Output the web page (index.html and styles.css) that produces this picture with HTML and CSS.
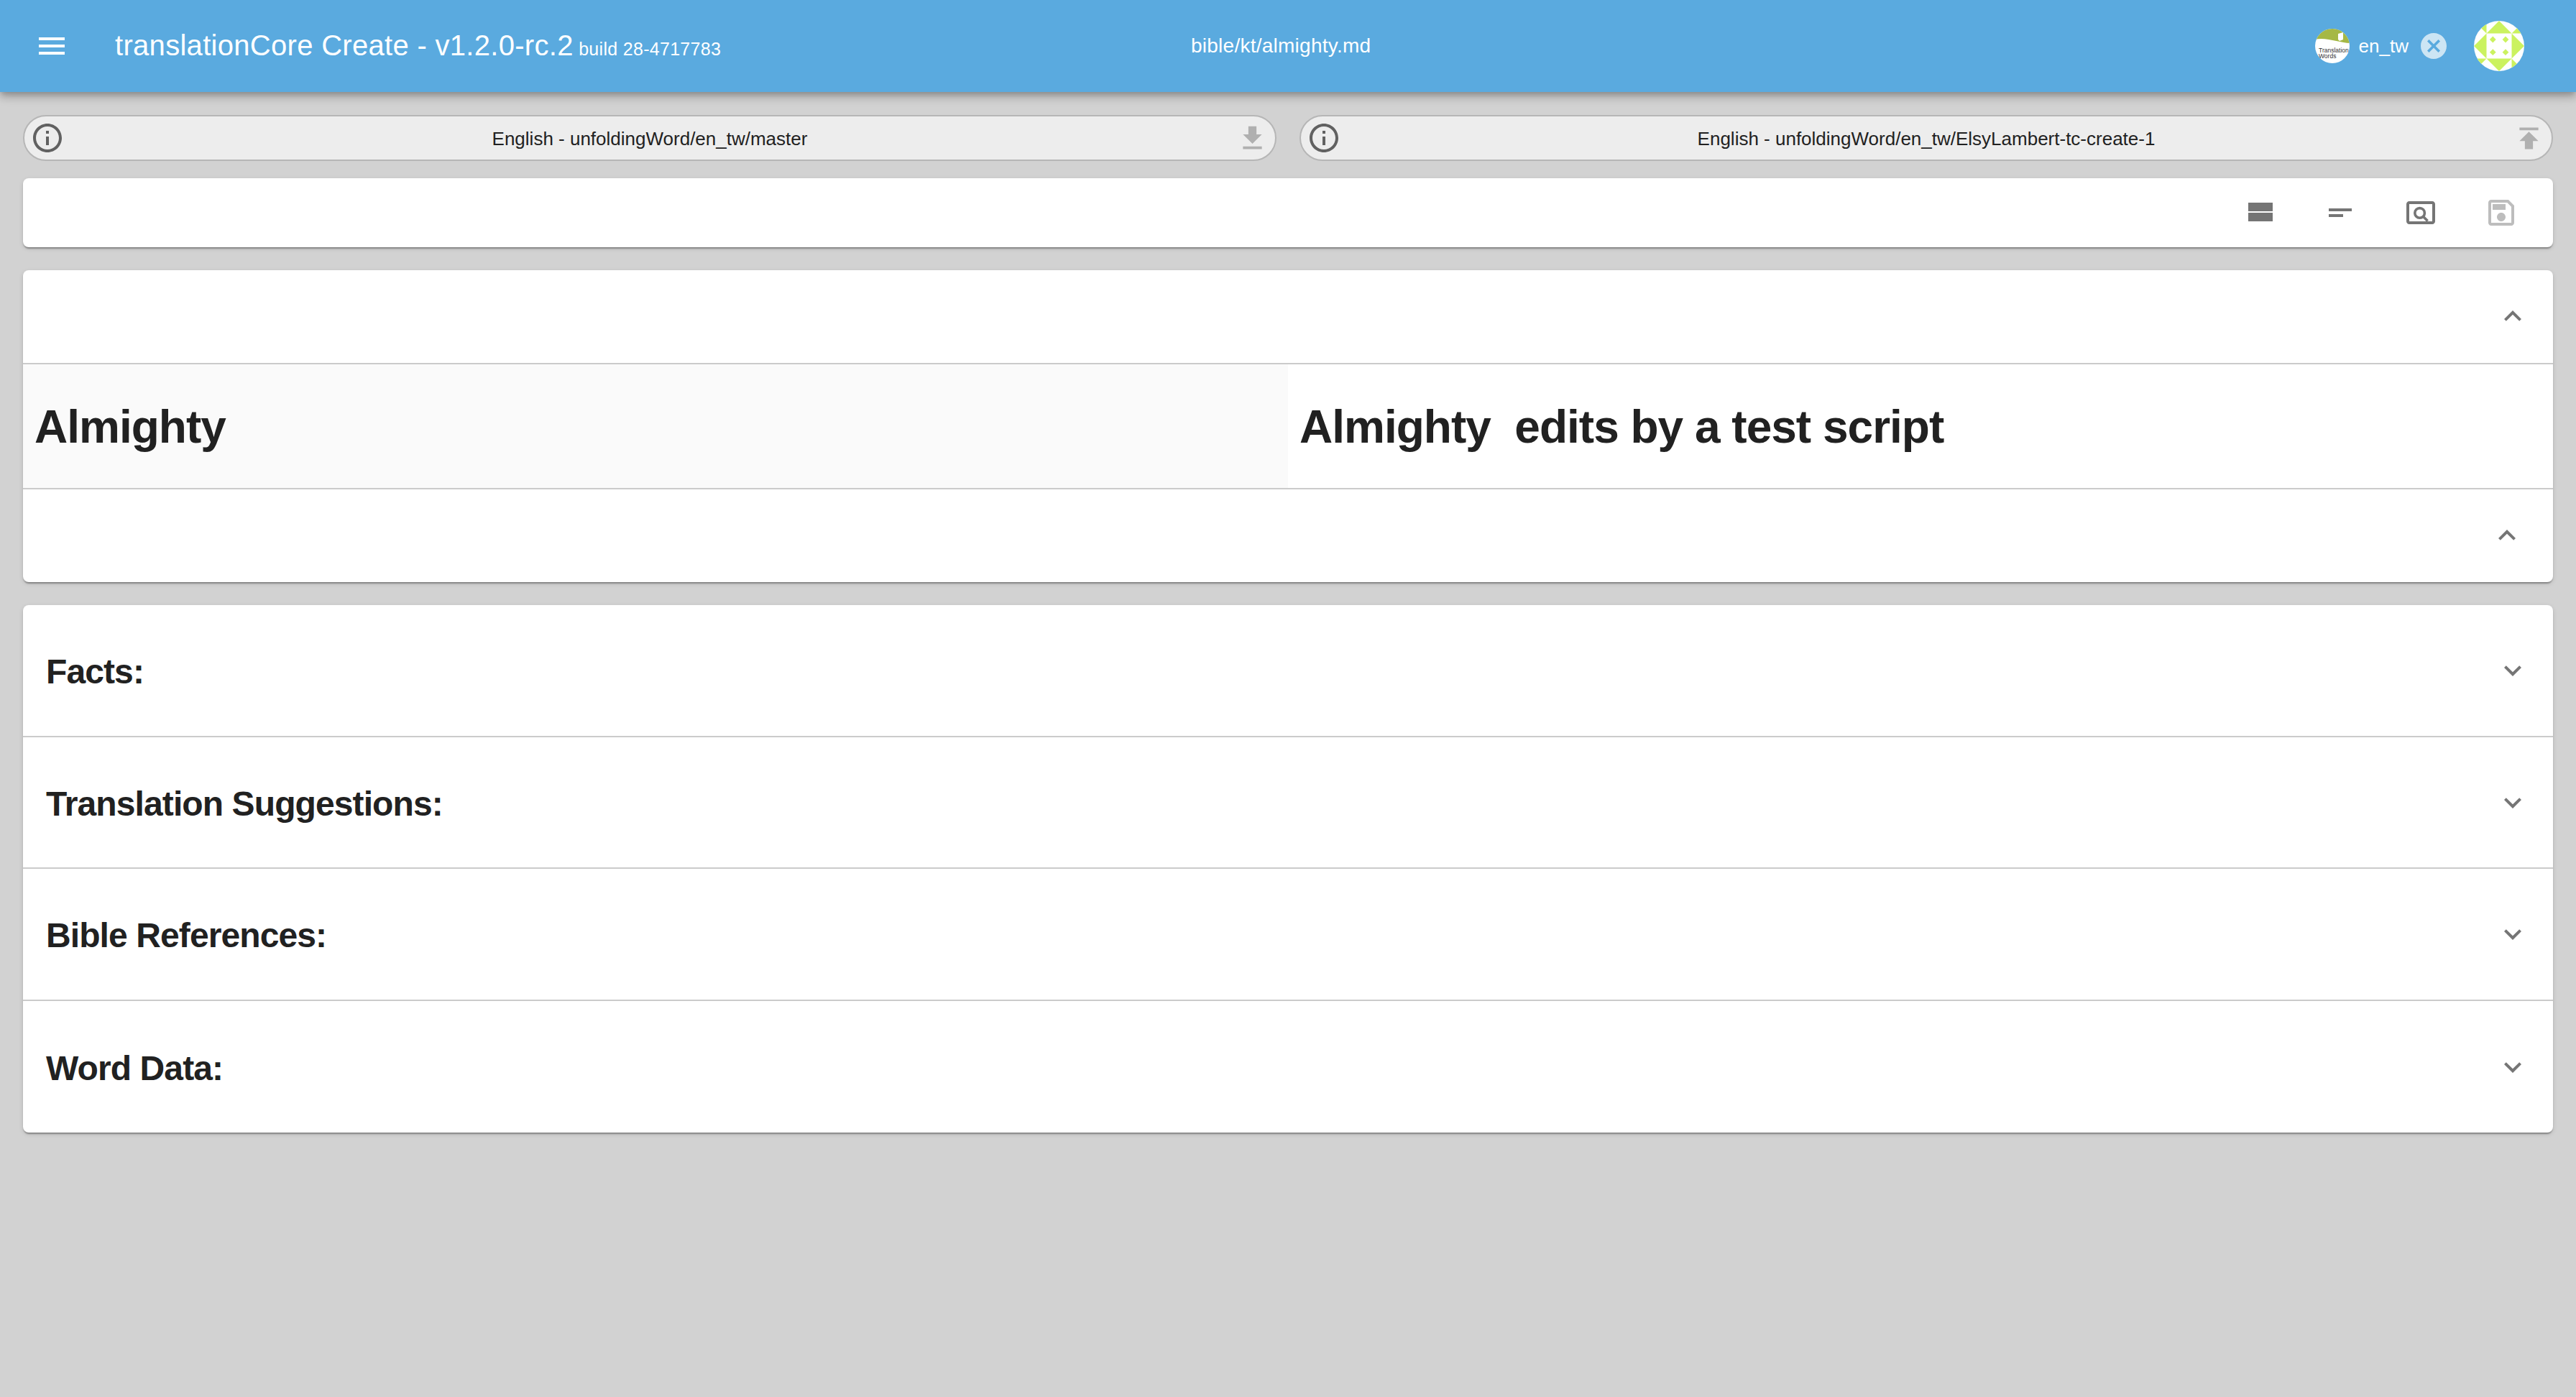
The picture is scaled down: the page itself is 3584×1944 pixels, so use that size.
FILE: index.html
```html
<!DOCTYPE html>
<html lang="en">
  <head>
    <meta charset="UTF-8" />
    <meta name="viewport" content="width=device-width, initial-scale=1.0" />
    <title>translationCore Create</title>
    <link rel="stylesheet" href="styles.css">
  </head>
  <body>
    <header class="app-bar">
      <svg class="icon menu-icon" viewBox="0 0 24 24"><path d="M3 18h18v-2H3v2zm0-5h18v-2H3v2zm0-7v2h18V6H3z" /></svg>
      <div class="app-title">translationCore Create - v1.2.0-rc.2 <small>build 28-4717783</small></div>
      <div class="file-path">bible/kt/almighty.md</div>
      <div class="app-right">
        <svg class="tw-logo" viewBox="0 0 48 48">
          <defs><clipPath id="logo-clip"><circle cx="24" cy="24" r="24" /></clipPath></defs>
          <g clip-path="url(#logo-clip)">
            <rect width="48" height="48" fill="#fff" />
            <path d="M0 0h48v20C36 20 14 11 0 15z" fill="#a5b845" />
            <path d="M32 7l7-2v10l-5 2-2-2z" fill="#fff" />
            <text x="5" y="33" class="tw-logo-text">Translation</text>
            <text x="5" y="41" class="tw-logo-text">Words</text>
          </g>
        </svg>
        <span class="repo-name">en_tw</span>
        <svg class="close-icon" viewBox="2 2 20 20"><path d="M12 2C6.47 2 2 6.47 2 12s4.47 10 10 10 10-4.47 10-10S17.53 2 12 2zm5 13.59L15.59 17 12 13.41 8.41 17 7 15.59 10.59 12 7 8.41 8.41 7 12 10.59 15.59 7 17 8.41 13.41 12 17 15.59z" /></svg>
        <svg class="avatar" viewBox="0 0 70 70">
          <circle cx="35" cy="35" r="35" fill="#fff" />
          <g clip-path="circle(35px at 35px 35px)" fill="#cbf25f">
            <path d="M35 0L17.5 17.5h35zM70 35L52.5 17.5v35zM35 70l17.5-17.5h-35zM0 35l17.5 17.5v-35z" />
            <path d="M17.5 0v17.5L8.75 8.75zM70 17.5H52.5l8.75-8.75zM52.5 70V52.5l8.75 8.75zM0 52.5h17.5l-8.75 8.75z" />
            <path d="M26.3 21.6l4.4 4.4-4.4 4.4-4.4-4.4zM44 21.6l4.4 4.4-4.4 4.4-4.4-4.4zM26.3 39.3l4.4 4.4-4.4 4.4-4.4-4.4zM44 39.3l4.4 4.4-4.4 4.4-4.4-4.4z" />
          </g>
        </svg>
      </div>
    </header>

    <main class="content">
      <div class="pills">
        <div class="pill">
          <svg class="icon info-icon" viewBox="0 0 24 24"><path d="M11 7h2v2h-2zm0 4h2v6h-2zm1-9C6.48 2 2 6.48 2 12s4.48 10 10 10 10-4.48 10-10S17.52 2 12 2zm0 18c-4.41 0-8-3.59-8-8s3.59-8 8-8 8 3.59 8 8-3.59 8-8 8z" /></svg>
          <span class="pill-text">English - unfoldingWord/en_tw/master</span>
          <span class="pill-action"><svg class="transfer-icon" viewBox="0 0 24 24"><path d="M19 9h-4V3H9v6H5l7 7 7-7zM5 18v2h14v-2H5z" /></svg></span>
        </div>
        <div class="pill">
          <svg class="icon info-icon" viewBox="0 0 24 24"><path d="M11 7h2v2h-2zm0 4h2v6h-2zm1-9C6.48 2 2 6.48 2 12s4.48 10 10 10 10-4.48 10-10S17.52 2 12 2zm0 18c-4.41 0-8-3.59-8-8s3.59-8 8-8 8 3.59 8 8-3.59 8-8 8z" /></svg>
          <span class="pill-text">English - unfoldingWord/en_tw/ElsyLambert-tc-create-1</span>
          <span class="pill-action"><svg class="transfer-icon" viewBox="0 0 24 24"><path d="M5 4v2h14V4H5zm0 10h4v6h6v-6h4l-7-7-7 7z" /></svg></span>
        </div>
      </div>

      <div class="card toolbar">
        <svg class="icon" viewBox="0 0 24 24"><path d="M4 18h17v-6H4v6zM4 5v6h17V5H4z" /></svg>
        <svg class="icon" viewBox="0 0 24 24"><path d="M4 9h16v2H4zm0 4h10v2H4z" /></svg>
        <svg class="icon" viewBox="0 0 24 24">
          <path d="M20 4H4c-1.1 0-2 .9-2 2v12c0 1.1.9 2 2 2h16c1.1 0 2-.9 2-2V6c0-1.1-.9-2-2-2zm0 14H4V6h16v12z" />
          <circle class="lens" cx="11.3" cy="12.2" r="3.4" />
          <path class="lens" d="M13.8 14.7l3 3" />
        </svg>
        <svg class="icon icon-disabled" viewBox="0 0 24 24"><path d="M17 3H5c-1.11 0-2 .9-2 2v14c0 1.1.89 2 2 2h14c1.1 0 2-.9 2-2V7l-4-4zm2 16H5V5h11.17L19 7.83V19zm-7-7c-1.66 0-3 1.34-3 3s1.34 3 3 3 3-1.34 3-3-1.34-3-3-3zM6 6h9v4H6z" /></svg>
      </div>

      <section class="card title-card">
        <div class="collapse-row">
          <svg class="icon" viewBox="0 0 24 24"><path d="M12 8l-6 6 1.41 1.41L12 10.83l4.59 4.58L18 14z" /></svg>
        </div>
        <div class="title-columns">
          <h1 class="title-source">Almighty</h1>
          <h1 class="title-target">Almighty&nbsp; edits by a test script</h1>
        </div>
        <div class="collapse-row collapse-row-inner">
          <svg class="icon" viewBox="0 0 24 24"><path d="M12 8l-6 6 1.41 1.41L12 10.83l4.59 4.58L18 14z" /></svg>
        </div>
      </section>

      <section class="card sections">
        <div class="section-row">
          <h2>Facts:</h2>
          <svg class="icon" viewBox="0 0 24 24"><path d="M16.59 8.59L12 13.17 7.41 8.59 6 10l6 6 6-6z" /></svg>
        </div>
        <div class="section-row">
          <h2>Translation Suggestions:</h2>
          <svg class="icon" viewBox="0 0 24 24"><path d="M16.59 8.59L12 13.17 7.41 8.59 6 10l6 6 6-6z" /></svg>
        </div>
        <div class="section-row">
          <h2>Bible References:</h2>
          <svg class="icon" viewBox="0 0 24 24"><path d="M16.59 8.59L12 13.17 7.41 8.59 6 10l6 6 6-6z" /></svg>
        </div>
        <div class="section-row">
          <h2>Word Data:</h2>
          <svg class="icon" viewBox="0 0 24 24"><path d="M16.59 8.59L12 13.17 7.41 8.59 6 10l6 6 6-6z" /></svg>
        </div>
      </section>
    </main>
  </body>
</html>
```

FILE: styles.css
```css
/* Reset */
* {
  margin: 0;
  padding: 0;
  box-sizing: border-box;
  font-family: "Liberation Sans", Arial, sans-serif;
}

body {
  background-color: #d2d2d2;
  min-height: 100vh;
}

.icon {
  width: 48px;
  height: 48px;
  flex: none;
  fill: #757575;
}

.icon-disabled {
  fill: #bdbdbd;
}

.lens {
  fill: none;
  stroke: #757575;
  stroke-width: 1.8;
}

/* App bar */
.app-bar {
  position: relative;
  display: flex;
  align-items: center;
  height: 128px;
  padding-left: 48px;
  padding-right: 72px;
  background-color: #5aaadf;
  color: #fff;
  box-shadow: 0 4px 8px -2px rgba(0, 0, 0, 0.2), 0 8px 10px 0 rgba(0, 0, 0, 0.14), 0 2px 20px 0 rgba(0, 0, 0, 0.12);
}

.menu-icon {
  fill: #fff;
  margin-right: 64px;
}

.app-title {
  flex: 0 0 1497px;
  padding-bottom: 2px;
  font-size: 40px;
  letter-spacing: 0.3px;
  white-space: nowrap;
}

.app-title small {
  margin-left: -4px;
  font-size: 25px;
}

.file-path {
  flex: 1;
  font-size: 28px;
  letter-spacing: 0.25px;
}

.app-right {
  display: flex;
  align-items: center;
}

.tw-logo {
  width: 48px;
  height: 48px;
}

.tw-logo-text {
  font-size: 8.5px;
  fill: #333;
}

.repo-name {
  margin-left: 13px;
  font-size: 26px;
}

.close-icon {
  width: 36px;
  height: 36px;
  margin-left: 17px;
  fill: #cce5f4;
}

.avatar {
  width: 70px;
  height: 70px;
  margin-left: 38px;
}

/* Page content */
.content {
  padding: 32px;
}

.pills {
  display: grid;
  grid-template-columns: 1fr 1fr;
  gap: 32px;
}

.pill {
  display: flex;
  align-items: center;
  height: 64px;
  padding: 0 8px;
  background-color: #ededed;
  border: 2px solid #b6b6b6;
  border-radius: 32px;
}

.info-icon {
  fill: #616161;
}

.pill-text {
  flex: 1;
  padding-top: 2px;
  text-align: center;
  font-size: 26px;
  color: #212121;
}

.pill-action {
  display: flex;
  align-items: center;
  justify-content: center;
  width: 48px;
  height: 48px;
}

.transfer-icon {
  width: 45px;
  height: 45px;
  fill: #b0b0b0;
}

.card {
  background-color: #fff;
  border-radius: 8px;
  box-shadow: 0 4px 2px -2px rgba(0, 0, 0, 0.2), 0 2px 2px 0 rgba(0, 0, 0, 0.14), 0 2px 6px 0 rgba(0, 0, 0, 0.12);
}

.toolbar {
  display: flex;
  justify-content: flex-end;
  align-items: center;
  gap: 64px;
  height: 96px;
  margin-top: 24px;
  padding-right: 48px;
}

/* Title card */
.title-card {
  margin-top: 32px;
}

.collapse-row {
  display: flex;
  justify-content: flex-end;
  align-items: center;
  height: 129px;
  padding-right: 32px;
  padding-bottom: 2px;
}

.collapse-row-inner {
  padding-right: 40px;
}

.title-columns {
  display: grid;
  grid-template-columns: 1fr 1fr;
  height: 176px;
  border-top: 2px solid #cbcbcb;
  border-bottom: 2px solid #cbcbcb;
}

.title-columns h1 {
  display: flex;
  align-items: center;
  padding-left: 16px;
  padding-top: 2px;
  font-size: 64px;
  font-weight: bold;
  letter-spacing: -1px;
  color: #212121;
}

.title-source {
  background-color: #fafafa;
}

/* Collapsed sections */
.sections {
  margin-top: 32px;
}

.section-row {
  display: flex;
  justify-content: space-between;
  align-items: center;
  height: 183.5px;
  padding: 1px 32px 0;
  border-bottom: 2px solid #cbcbcb;
}

.section-row:last-child {
  border-bottom: none;
}

.section-row h2 {
  padding-top: 3px;
  font-size: 48px;
  font-weight: bold;
  letter-spacing: -0.9px;
  color: #212121;
}
```
